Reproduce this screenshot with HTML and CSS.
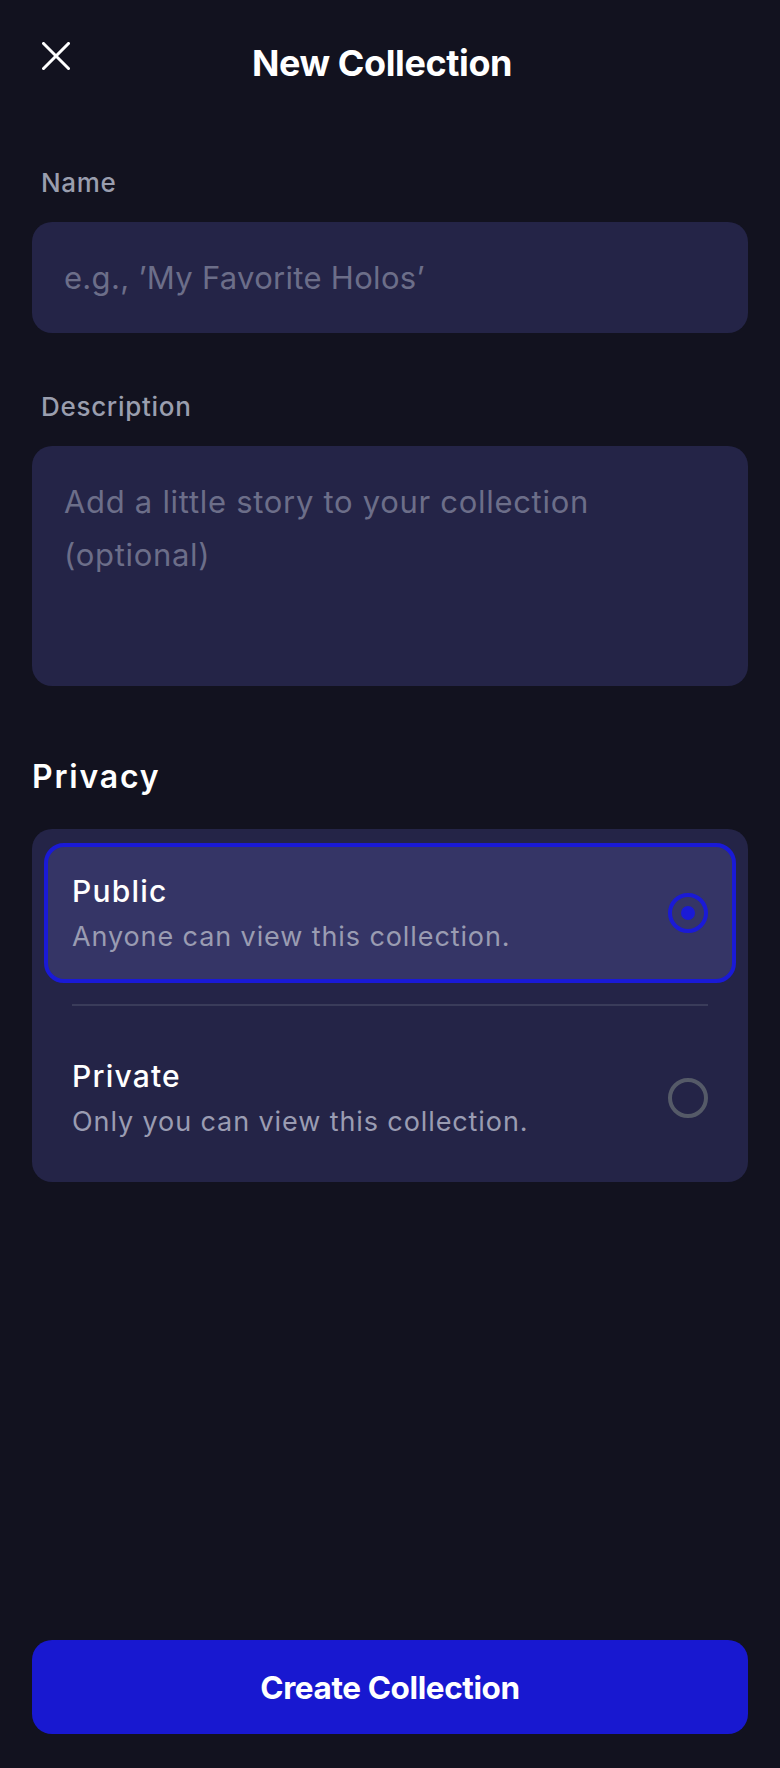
FILE: index.html
```html
<!DOCTYPE html>
<html lang="en">
<head>
<meta charset="utf-8">
<title>New Collection</title>
<link rel="stylesheet" href="styles.css">
</head>
<body>
<div class="screen">
  <header class="header">
    <button class="close" aria-label="Close">
      <svg viewBox="0 0 28 28" width="28" height="28"><path d="M1.5 1.5 L26.5 26.5 M26.5 1.5 L1.5 26.5" stroke="#ffffff" stroke-width="3" stroke-linecap="square" fill="none"/></svg>
    </button>
    <h1 class="title">New Collection</h1>
    <div class="spacer"></div>
  </header>

  <main class="form">
    <label class="label">Name</label>
    <div class="field field-input"><span class="placeholder">e.g., ’My Favorite Holos’</span></div>

    <label class="label label-desc">Description</label>
    <div class="field field-area"><span class="placeholder placeholder-area">Add a little story to your collection (optional)</span></div>

    <h2 class="section">Privacy</h2>
    <div class="card">
      <div class="option option-active">
        <div class="option-text">
          <div class="option-title">Public</div>
          <div class="option-sub">Anyone can view this collection.</div>
        </div>
        <span class="radio radio-on"></span>
      </div>
      <div class="divider"></div>
      <div class="option">
        <div class="option-text">
          <div class="option-title">Private</div>
          <div class="option-sub">Only you can view this collection.</div>
        </div>
        <span class="radio"></span>
      </div>
    </div>
  </main>

  <div class="footer">
    <button class="create">Create Collection</button>
  </div>
</div>
</body>
</html>
```
FILE: styles.css
```css
* { box-sizing: border-box; }
html, body {
  margin: 0;
  padding: 0;
  background: #12121f;
}
body {
  font-family: "Inter", "Noto Sans", sans-serif;
  color: #ffffff;
}
.screen {
  min-height: 1768px;
  display: flex;
  flex-direction: column;
}
.header {
  display: flex;
  align-items: flex-start;
  height: 112px;
  padding: 0 32px;
}
.close {
  width: 48px;
  height: 48px;
  margin-top: 32px;
  padding: 0;
  border: none;
  background: transparent;
  display: flex;
  align-items: center;
  justify-content: center;
}
.close svg { width: 28px; height: 28px; }
.title {
  flex: 1;
  margin: 39px 0 0;
  text-align: center;
  font-size: 36px;
  line-height: 48px;
  font-weight: 700;
  letter-spacing: -0.4px;
}
.spacer { width: 64px; }

.form {
  padding: 0 32px;
  display: flex;
  flex-direction: column;
}
.label {
  margin-top: 53px;
  padding-left: 9px;
  font-size: 26px;
  line-height: 36px;
  color: #9a9eae;
  font-weight: 500;
  letter-spacing: 0.7px;
}
.label-desc { margin-top: 56px; }
.field {
  margin-top: 21px;
  background: #242447;
  border-radius: 20px;
  padding: 0 32px;
}
.placeholder {
  color: #6c6e89;
  font-size: 31px;
  letter-spacing: 0.3px;
}
.placeholder-area { letter-spacing: 0.7px; }
.field-input {
  height: 111px;
  display: flex;
  align-items: center;
}
.field-area {
  height: 240px;
  padding-top: 32px;
  padding-right: 100px;
  line-height: 48px;
}
.section {
  margin: 71px 0 0;
  font-size: 32px;
  line-height: 40px;
  font-weight: 600;
  letter-spacing: 1.8px;
}
.card {
  margin-top: 32px;
  background: #242447;
  border-radius: 20px;
  padding: 14px 12px;
  display: flex;
  flex-direction: column;
}
.option {
  height: 140px;
  border: 4px solid transparent;
  border-radius: 20px;
  padding: 0 24px;
  display: flex;
  align-items: center;
  justify-content: space-between;
}
.option-active {
  background: #353566;
  border-color: #1a1ad6;
}
.option-title {
  font-size: 30px;
  line-height: 40px;
  font-weight: 500;
  letter-spacing: 1.2px;
  color: #ffffff;
}
.option-sub {
  margin-top: 8px;
  font-size: 27px;
  line-height: 36px;
  letter-spacing: 0.9px;
  color: #9a9cb2;
}
.divider {
  height: 2px;
  margin: 21px 28px 22px;
  background: #3a3c5a;
}
.radio {
  width: 40px;
  height: 40px;
  border-radius: 50%;
  border: 4px solid #555a68;
  display: flex;
  align-items: center;
  justify-content: center;
  flex: none;
}
.radio-on { border-color: #1a1ad6; }
.radio-on::after {
  content: "";
  width: 14px;
  height: 14px;
  border-radius: 50%;
  background: #1a1ad6;
}

.footer {
  margin-top: auto;
  padding: 0 32px 34px;
}
.create {
  width: 100%;
  height: 94px;
  border: none;
  border-radius: 20px;
  background: #1818d0;
  color: #ffffff;
  font-family: "Inter", "Noto Sans", sans-serif;
  font-size: 31.5px;
  font-weight: 700;
  letter-spacing: -0.4px;
}
```
